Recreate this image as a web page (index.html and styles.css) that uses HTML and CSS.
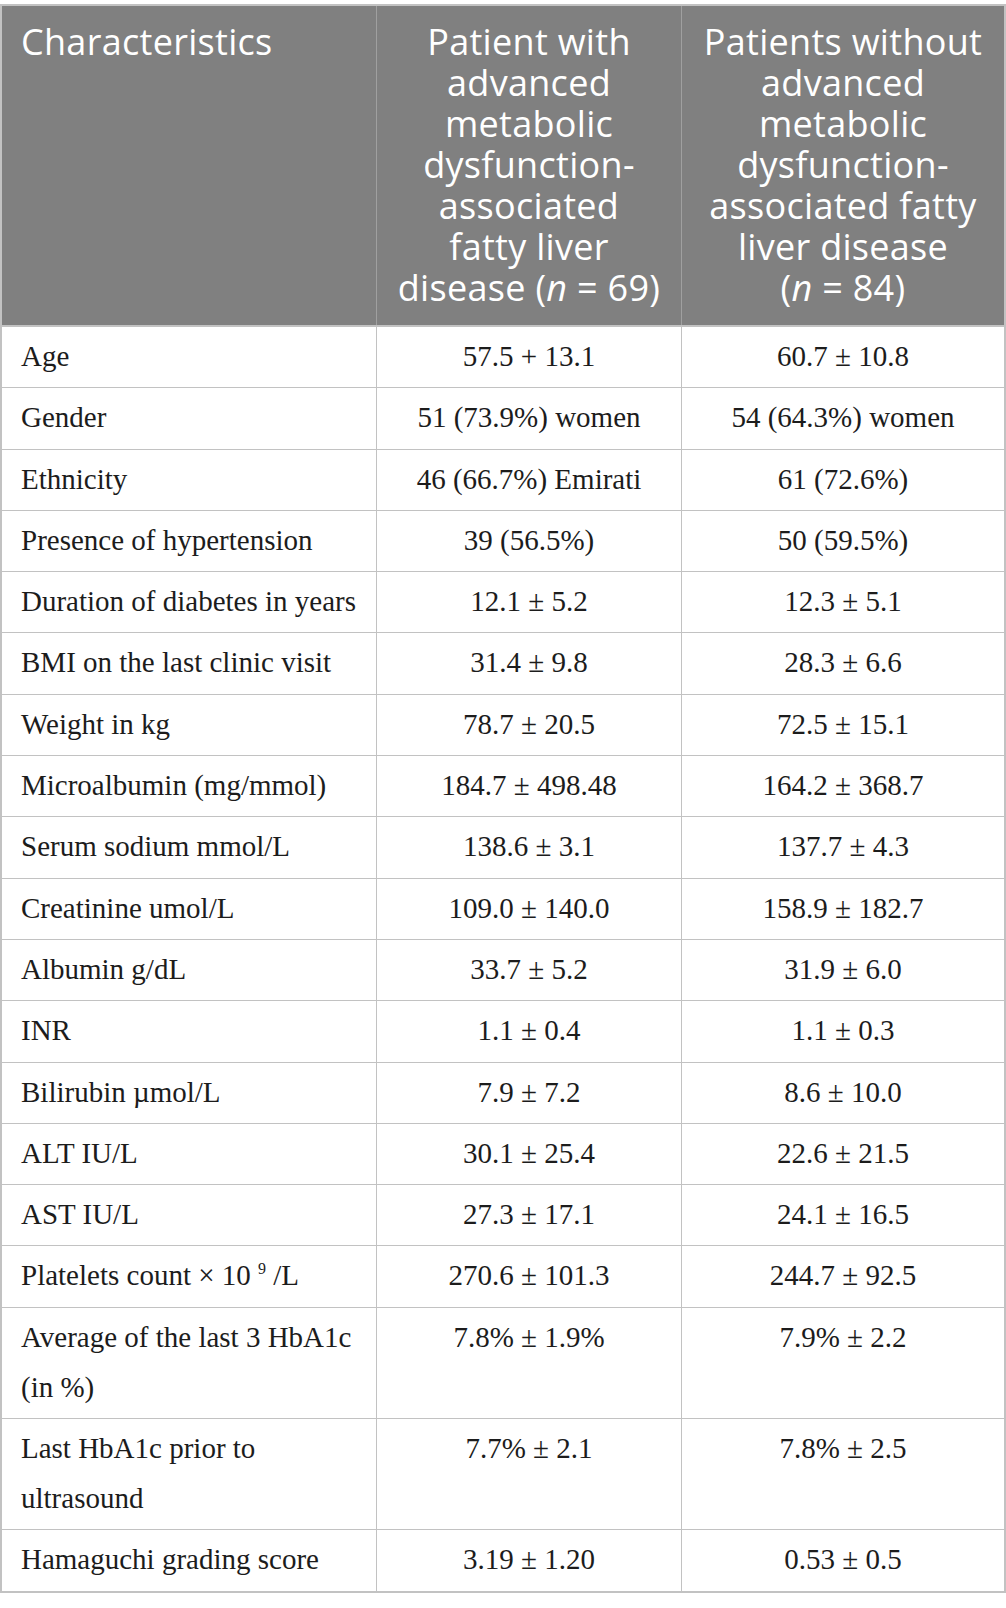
FILE: index.html
```html
<!DOCTYPE html>
<html>
<head>
<meta charset="utf-8">
<link rel="stylesheet" href="styles.css">
</head>
<body>
<table class="data">
  <thead>
    <tr>
      <th class="c1">Characteristics</th>
      <th class="c2">Patient with<br>advanced<br>metabolic<br>dysfunction-<br>associated<br>fatty liver<br>disease (<i>n</i> = 69)</th>
      <th class="c3">Patients without<br>advanced<br>metabolic<br>dysfunction-<br>associated fatty<br>liver disease<br>(<i>n</i> = 84)</th>
    </tr>
  </thead>
  <tbody>
    <tr><td>Age</td><td>57.5 + 13.1</td><td>60.7 ± 10.8</td></tr>
    <tr><td>Gender</td><td>51 (73.9%) women</td><td>54 (64.3%) women</td></tr>
    <tr><td>Ethnicity</td><td>46 (66.7%) Emirati</td><td>61 (72.6%)</td></tr>
    <tr><td>Presence of hypertension</td><td>39 (56.5%)</td><td>50 (59.5%)</td></tr>
    <tr><td>Duration of diabetes in years</td><td>12.1 ± 5.2</td><td>12.3 ± 5.1</td></tr>
    <tr><td>BMI on the last clinic visit</td><td>31.4 ± 9.8</td><td>28.3 ± 6.6</td></tr>
    <tr><td>Weight in kg</td><td>78.7 ± 20.5</td><td>72.5 ± 15.1</td></tr>
    <tr><td>Microalbumin (mg/mmol)</td><td>184.7 ± 498.48</td><td>164.2 ± 368.7</td></tr>
    <tr><td>Serum sodium mmol/L</td><td>138.6 ± 3.1</td><td>137.7 ± 4.3</td></tr>
    <tr><td>Creatinine umol/L</td><td>109.0 ± 140.0</td><td>158.9 ± 182.7</td></tr>
    <tr><td>Albumin g/dL</td><td>33.7 ± 5.2</td><td>31.9 ± 6.0</td></tr>
    <tr><td>INR</td><td>1.1 ± 0.4</td><td>1.1 ± 0.3</td></tr>
    <tr><td>Bilirubin µmol/L</td><td>7.9 ± 7.2</td><td>8.6 ± 10.0</td></tr>
    <tr><td>ALT IU/L</td><td>30.1 ± 25.4</td><td>22.6 ± 21.5</td></tr>
    <tr><td>AST IU/L</td><td>27.3 ± 17.1</td><td>24.1 ± 16.5</td></tr>
    <tr><td>Platelets count × 10 <sup>9</sup> /L</td><td>270.6 ± 101.3</td><td>244.7 ± 92.5</td></tr>
    <tr><td>Average of the last 3 HbA1c<br>(in %)</td><td>7.8% ± 1.9%</td><td>7.9% ± 2.2</td></tr>
    <tr><td>Last HbA1c prior to<br>ultrasound</td><td>7.7% ± 2.1</td><td>7.8% ± 2.5</td></tr>
    <tr><td>Hamaguchi grading score</td><td>3.19 ± 1.20</td><td>0.53 ± 0.5</td></tr>
  </tbody>
</table>
</body>
</html>
```
FILE: styles.css
```css
html, body {
  margin: 0;
  padding: 0;
  background: #ffffff;
}
body {
  padding-top: 4px;
}
.data {
  width: 1006px;
  border-collapse: collapse;
  table-layout: fixed;
  border: 2px solid #c2c2c2;
}
.data th {
  background: #808080;
  color: #ffffff;
  font-family: "Open Sans", Roboto, sans-serif;
  font-weight: 400;
  font-size: 36px;
  letter-spacing: 0.3px;
  line-height: 41px;
  padding: 15px 6px 17px 6px;
  vertical-align: top;
  text-align: center;
  border-left: 1px solid #a0a0a0;
  border-bottom: 2px solid #c2c2c2;
}
.data th.c1 {
  width: 349px;
  text-align: left;
  padding-left: 19px;
  border-left: none;
}
.data th.c2 {
  width: 292px;
}
.data th i {
  font-style: italic;
}
.data td {
  font-family: "Liberation Serif", "Times New Roman", serif;
  font-size: 29px;
  line-height: 50px;
  color: #1c1c1c;
  padding: 4px 8px 6.3px 8px;
  vertical-align: top;
  text-align: center;
  border: 1px solid #c2c2c2;
  white-space: nowrap;
}
.data td:first-child {
  text-align: left;
  padding-left: 19px;
}
.data sup {
  font-size: 16px;
  line-height: 0;
  vertical-align: 11px;
}
```
